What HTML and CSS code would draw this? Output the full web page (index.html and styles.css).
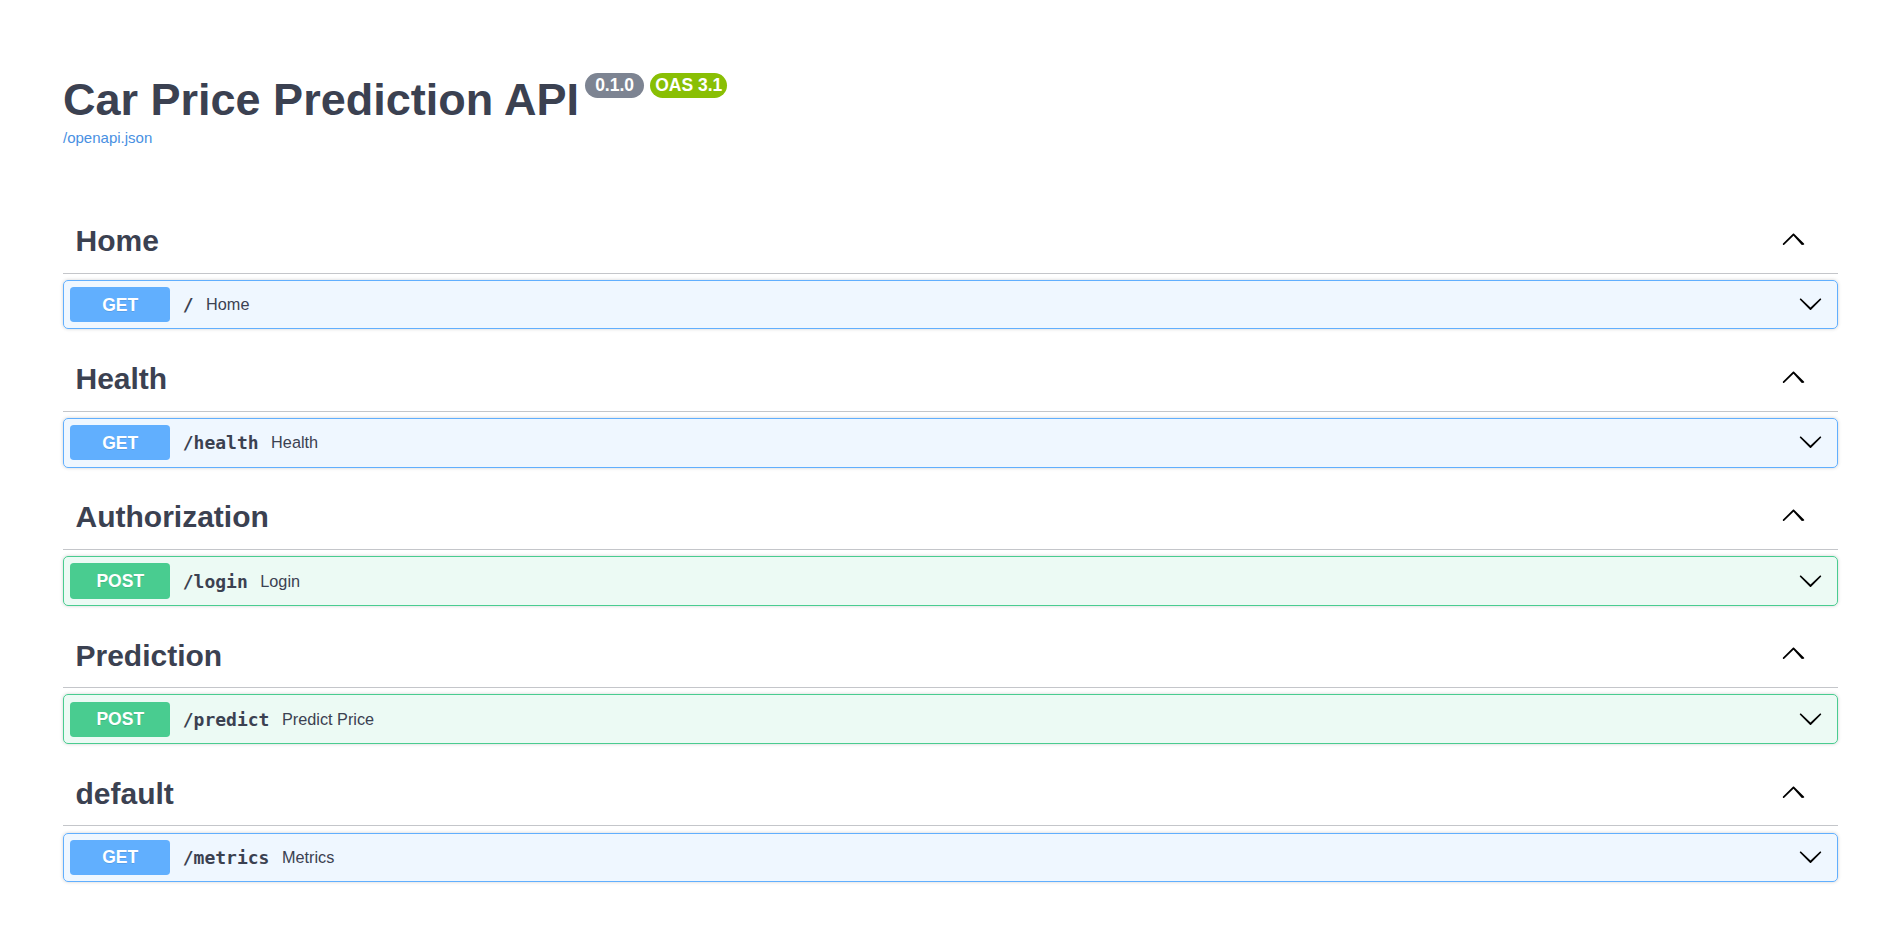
FILE: index.html
```html
<!DOCTYPE html>
<html lang="en">
<head>
<meta charset="utf-8">
<title>Car Price Prediction API - Swagger UI</title>
<link rel="stylesheet" href="styles.css">
</head>
<body>
<svg class="sprites" xmlns="http://www.w3.org/2000/svg">
  <defs>
    <symbol id="arrow-up" viewBox="0 0 20 20">
      <path d="M17.418 14.908c-.272.268-.709.268-.979 0L10 7.767l-7.418 7.141c-.27.268-.707.268-.979 0-.27-.268-.27-.701 0-.969l7.908-7.830c.27-.268.707-.268.979 0l7.908 7.830c.27.268.27.701 0 .969z"/>
    </symbol>
    <symbol id="arrow-down" viewBox="0 0 20 20">
      <path d="M17.418 6.109c.272-.268.709-.268.979 0s.271.701 0 .969l-7.908 7.83c-.27.268-.707.268-.979 0l-7.908-7.83c-.27-.268-.27-.701 0-.969.271-.268.709-.268.979 0L10 13.25l7.418-7.141z"/>
    </symbol>
  </defs>
</svg>

<div class="wrapper">
  <header class="info">
    <h2 class="title">
      <span>Car Price Prediction API</span>
      <small class="badge badge-version"><span class="badge-text"> 0.1.0 </span></small>
      <small class="badge badge-oas"><span class="badge-text">OAS 3.1</span></small>
    </h2>
    <a class="link" href="#">/openapi.json</a>
  </header>

  <section class="tag-section">
    <h3 class="tag">
      <span class="tag-name">Home</span>
      <button class="toggle tag-toggle" type="button"><svg class="arrow"><use href="#arrow-up"/></svg></button>
    </h3>
    <div class="op op-get">
      <div class="op-summary">
        <span class="method">GET</span>
        <span class="path">/</span>
        <span class="desc">Home</span>
        <button class="toggle op-toggle" type="button"><svg class="arrow"><use href="#arrow-down"/></svg></button>
      </div>
    </div>
  </section>

  <section class="tag-section">
    <h3 class="tag">
      <span class="tag-name">Health</span>
      <button class="toggle tag-toggle" type="button"><svg class="arrow"><use href="#arrow-up"/></svg></button>
    </h3>
    <div class="op op-get">
      <div class="op-summary">
        <span class="method">GET</span>
        <span class="path">/health</span>
        <span class="desc">Health</span>
        <button class="toggle op-toggle" type="button"><svg class="arrow"><use href="#arrow-down"/></svg></button>
      </div>
    </div>
  </section>

  <section class="tag-section">
    <h3 class="tag">
      <span class="tag-name">Authorization</span>
      <button class="toggle tag-toggle" type="button"><svg class="arrow"><use href="#arrow-up"/></svg></button>
    </h3>
    <div class="op op-post">
      <div class="op-summary">
        <span class="method">POST</span>
        <span class="path">/login</span>
        <span class="desc">Login</span>
        <button class="toggle op-toggle" type="button"><svg class="arrow"><use href="#arrow-down"/></svg></button>
      </div>
    </div>
  </section>

  <section class="tag-section">
    <h3 class="tag">
      <span class="tag-name">Prediction</span>
      <button class="toggle tag-toggle" type="button"><svg class="arrow"><use href="#arrow-up"/></svg></button>
    </h3>
    <div class="op op-post">
      <div class="op-summary">
        <span class="method">POST</span>
        <span class="path">/predict</span>
        <span class="desc">Predict Price</span>
        <button class="toggle op-toggle" type="button"><svg class="arrow"><use href="#arrow-down"/></svg></button>
      </div>
    </div>
  </section>

  <section class="tag-section">
    <h3 class="tag">
      <span class="tag-name">default</span>
      <button class="toggle tag-toggle" type="button"><svg class="arrow"><use href="#arrow-up"/></svg></button>
    </h3>
    <div class="op op-get">
      <div class="op-summary">
        <span class="method">GET</span>
        <span class="path">/metrics</span>
        <span class="desc">Metrics</span>
        <button class="toggle op-toggle" type="button"><svg class="arrow"><use href="#arrow-down"/></svg></button>
      </div>
    </div>
  </section>
</div>
</body>
</html>
```

FILE: styles.css
```css
html, body {
  margin: 0;
  padding: 0;
  background: #fff;
}

body {
  font-family: "Liberation Sans", Arial, sans-serif;
  color: #3b4151;
}

.sprites {
  position: absolute;
  width: 0;
  height: 0;
  overflow: hidden;
}

.wrapper {
  width: 1775px;
  margin-left: 63px;
  padding-top: 74px;
}

/* ---- info header ---- */
.info {
  margin-bottom: 63.75px;
}

.title {
  display: flex;
  align-items: flex-start;
  margin: 0;
  font-size: 45px;
  line-height: 52px;
  font-weight: 700;
  color: #3b4151;
}

.badge {
  margin: -1.5px 0 0 6.25px;
  padding: 2.5px 5px;
  border-radius: 71px;
  font-size: 17.5px;
  line-height: 20px;
  font-weight: 700;
  color: #fff;
}

.badge-text {
  white-space: pre;
}

.badge-version {
  background: #7d8492;
}

.badge-oas {
  background: #89bf04;
}

.link {
  display: block;
  margin-top: 3px;
  font-size: 15px;
  line-height: 17.25px;
  color: #4990e2;
  text-decoration: none;
  width: max-content;
}

/* ---- tag groups ---- */
.tag {
  display: flex;
  align-items: center;
  margin: 0 0 6.25px;
  padding: 12.5px 32px 12.5px 12.5px;
  min-height: 37.6px;
  border-bottom: 1px solid rgba(59, 65, 81, 0.3);
  font-size: 30px;
  line-height: 34.5px;
  font-weight: 700;
  color: #3b4151;
}

.tag-name {
  flex: 1 1 auto;
}

.toggle {
  display: flex;
  align-items: center;
  border: none;
  background: none;
  padding: 0;
  margin: 0;
  cursor: pointer;
}

.tag-toggle {
  margin-bottom: 6px;
}

.arrow {
  width: 25px;
  height: 25px;
  fill: #000;
}

/* ---- operation rows ---- */
.op {
  margin: 0 0 18.75px;
  border: 1px solid;
  border-radius: 5px;
  box-shadow: 0 0 3.75px rgba(0, 0, 0, 0.19);
}

.op-get {
  background: rgba(97, 175, 254, 0.1);
  border-color: #61affe;
}

.op-post {
  background: rgba(73, 204, 144, 0.1);
  border-color: #49cc90;
}

.op-summary {
  display: flex;
  align-items: center;
  padding: 6.25px;
}

.method {
  min-width: 100px;
  padding: 7.5px 0;
  border-radius: 3.75px;
  text-align: center;
  font-size: 17.5px;
  line-height: 20.1px;
  font-weight: 700;
  color: #fff;
  text-shadow: 0 1px 0 rgba(0, 0, 0, 0.1);
}

.op-get .method {
  background: #61affe;
}

.op-post .method {
  background: #49cc90;
}

.path {
  padding: 0 12.5px;
  font-family: "DejaVu Sans Mono", "Liberation Mono", monospace;
  font-size: 18px;
  font-weight: 700;
  color: #3b4151;
}

.desc {
  flex: 1 1 auto;
  font-size: 16.25px;
  color: #3b4151;
}

.op-toggle {
  margin: 0 7.75px 2px 0;
}
```
